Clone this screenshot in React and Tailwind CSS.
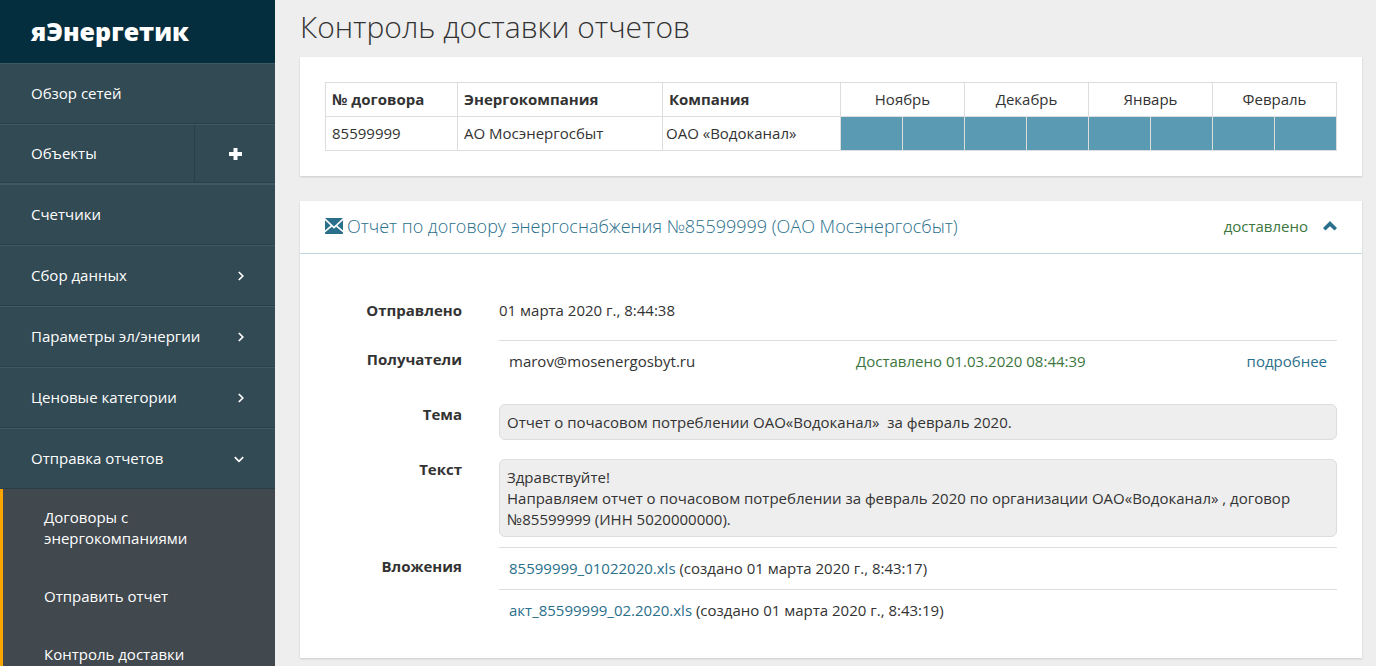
import React, { useState } from 'react';

const menuItems = [
  { label: 'Счетчики' },
  { label: 'Сбор данных', arrow: 'right' },
  { label: 'Параметры эл/энергии', arrow: 'right' },
  { label: 'Ценовые категории', arrow: 'right' },
  { label: 'Отправка отчетов', arrow: 'down' }
];

const subItems = ['Договоры с энергокомпаниями', 'Отправить отчет', 'Контроль доставки'];

const months = ['Ноябрь', 'Декабрь', 'Январь', 'Февраль'];

const attachments = [
  { name: '85599999_01022020.xls', created: '01 марта 2020 г., 8:43:17' },
  { name: 'акт_85599999_02.2020.xls', created: '01 марта 2020 г., 8:43:19' }
];

function MenuArrow({ direction }) {
  return (
    <svg className="w-3 h-3" viewBox="0 0 12 12" fill="none" stroke="currentColor" strokeWidth="1.7">
      {direction === 'down' ? <path d="M1.8 4.2L6 8.3l4.2-4.1" /> : <path d="M5.8 2L9.8 6l-4 4" />}
    </svg>
  );
}

function EnvelopeIcon() {
  return (
    <svg className="w-[18px] h-4 shrink-0" viewBox="0 0 18 16" fill="currentColor">
      <path d="M0 0h18L9 8.6z" />
      <path d="M0 2.2L5.6 7.6 0 12.4z" />
      <path d="M18 2.2v10.2l-5.6-4.8z" />
      <path d="M0 16v-1.4l6.8-5.9L9 10.8l2.2-2.1 6.8 5.9V16z" />
    </svg>
  );
}

function Sidebar() {
  return (
    <aside className="sticky top-0 h-screen w-[275px] shrink-0 overflow-hidden bg-[#324a54] text-white">
      <div className="flex h-[63px] items-center bg-[#042e3e] px-[31px] text-[25px] font-extrabold">
        <a href="#">яЭнергетик</a>
      </div>
      <nav>
        <a
          href="#"
          className="flex h-[61px] items-center border-t border-b border-t-[#3f5a65] border-b-[#293f48] px-[31px]"
        >
          Обзор сетей
        </a>
        <div className="flex h-[59px] border-t border-b border-t-[#3f5a65] border-b-[#293f48]">
          <a href="#" className="flex flex-1 items-center pl-[31px]">
            Объекты
          </a>
          <button
            type="button"
            aria-label="Добавить объект"
            className="flex w-[81px] items-center justify-center border-l border-[#293f48]"
          >
            <svg className="w-[13px] h-3" viewBox="0 0 13 12" fill="currentColor">
              <path d="M4.5 0h4v4h4.5v4H8.5v4h-4V8H0V4h4.5z" />
            </svg>
          </button>
        </div>
        <div className="border-t border-[#3f5a65]">
          {menuItems.map((item) => (
            <a
              key={item.label}
              href="#"
              className="flex h-[61px] items-center justify-between border-t border-b border-t-[#3f5a65] border-b-[#293f48] pl-[31px] pr-[30px]"
            >
              {item.label}
              {item.arrow && <MenuArrow direction={item.arrow} />}
            </a>
          ))}
        </div>
        <div className="border-l-3 border-[#ffa500] bg-[#41484e]">
          {subItems.map((label) => (
            <a key={label} href="#" className="block pt-[18px] pb-[19px] pl-[41px] pr-16">
              {label}
            </a>
          ))}
        </div>
      </nav>
    </aside>
  );
}

function DeliveryTable() {
  return (
    <section className="bg-white p-[25px] shadow-[0_1px_2px_rgba(0,0,0,0.15)]">
      <table className="w-full table-fixed border-collapse [&_td]:border [&_td]:border-[#ddd] [&_th]:border [&_th]:border-[#ddd]">
        <colgroup>
          <col className="w-[132px]" />
          <col className="w-[205px]" />
          <col />
          {months.map((month) => (
            <React.Fragment key={month}>
              <col className="w-[62px]" />
              <col className="w-[62px]" />
            </React.Fragment>
          ))}
        </colgroup>
        <thead>
          <tr className="h-[34px] text-left">
            <th className="px-1.5 font-bold">№ договора</th>
            <th className="px-1.5 font-bold">Энергокомпания</th>
            <th className="px-1.5 font-bold">Компания</th>
            {months.map((month) => (
              <th key={month} colSpan={2} className="text-center font-normal">
                {month}
              </th>
            ))}
          </tr>
        </thead>
        <tbody>
          <tr className="h-[34px]">
            <td className="px-1.5">85599999</td>
            <td className="px-1.5">АО Мосэнергосбыт</td>
            <td className="px-[3px]">ОАО «Водоканал»</td>
            {months.map((month) => (
              <React.Fragment key={month}>
                <td className="bg-[#5a9ab3]"></td>
                <td className="bg-[#5a9ab3]"></td>
              </React.Fragment>
            ))}
          </tr>
        </tbody>
      </table>
    </section>
  );
}

function Row({ label, className = '', labelClass = '', children }) {
  return (
    <div className={`grid grid-cols-[137px_1fr] gap-x-[37px] ${className}`}>
      <dt className={`text-right font-bold ${labelClass}`}>{label}</dt>
      <dd>{children}</dd>
    </div>
  );
}

function ReportCard() {
  const [open, setOpen] = useState(true);

  return (
    <section className="mt-[25px] bg-white shadow-[0_1px_2px_rgba(0,0,0,0.15)]">
      <div className="flex h-[53px] items-center justify-between border-b border-[#bcd8e2] px-[25px] pb-0.5">
        <h2 className="flex items-center gap-1 text-lg font-light text-[#2a6f8b]">
          <EnvelopeIcon />
          <a href="#">Отчет по договору энергоснабжения №85599999 (ОАО Мосэнергосбыт)</a>
        </h2>
        <div className="flex items-center gap-[15px]">
          <span className="text-[#3c763d]">доставлено</span>
          <button type="button" aria-label="Свернуть" className="text-[#2a6f8b]" onClick={() => setOpen(!open)}>
            <svg className="w-[14px] h-[10px]" viewBox="0 0 14 10" fill="currentColor">
              <path d="M7 0l7 7-2.5 2.5L7 5.2 2.5 9.5 0 7z" />
            </svg>
          </button>
        </div>
      </div>

      {open && (
        <dl className="px-[25px] pt-[46px] pb-[27px]">
          <Row label="Отправлено" className="pb-[19px]">
            01 марта 2020 г., 8:44:38
          </Row>

          <Row label="Получатели" className="pb-8" labelClass="pt-[9px]">
            <div className="flex border-t border-[#ddd] px-[10px] pt-[10px]">
              <span className="w-[347px]">marov@mosenergosbyt.ru</span>
              <span className="flex-1 text-[#3c763d]">Доставлено 01.03.2020 08:44:39</span>
              <a href="#" className="text-[#2a6f8b]">подробнее</a>
            </div>
          </Row>

          <Row label="Тема" className="pb-[19px]">
            <div className="rounded-md border border-[#ddd] bg-[#eee] px-[7px] pt-[7px] pb-[6px] whitespace-pre-wrap">
              {'Отчет о почасовом потреблении ОАО«Водоканал»  за февраль 2020.'}
            </div>
          </Row>

          <Row label="Текст" className="pb-[10px]">
            <div className="rounded-md border border-[#ddd] bg-[#eee] px-[7px] pt-[7px] pb-[6px]">
              <p>Здравствуйте!</p>
              <p>
                Направляем отчет о почасовом потреблении за февраль 2020 по организации ОАО«Водоканал» , договор
                №85599999 (ИНН 5020000000).
              </p>
            </div>
          </Row>

          <Row label="Вложения" labelClass="pt-[9px]">
            <ul>
              {attachments.map((file) => (
                <li key={file.name} className="border-t border-[#ddd] px-[10px] py-[10px]">
                  <a href="#" className="text-[#2a6f8b]">{file.name}</a> (создано {file.created})
                </li>
              ))}
            </ul>
          </Row>
        </dl>
      )}
    </section>
  );
}

export default function App() {
  return (
    <div className="flex min-h-screen bg-[#eee] font-['Open_Sans',sans-serif] text-[15px] leading-[21px] text-[#333]">
      <Sidebar />
      <main className="min-w-0 flex-1 pl-[25px] pr-[14px]">
        <h1 className="flex h-[57px] items-center pb-1 text-[30px] font-light">Контроль доставки отчетов</h1>
        <DeliveryTable />
        <ReportCard />
      </main>
    </div>
  );
}
